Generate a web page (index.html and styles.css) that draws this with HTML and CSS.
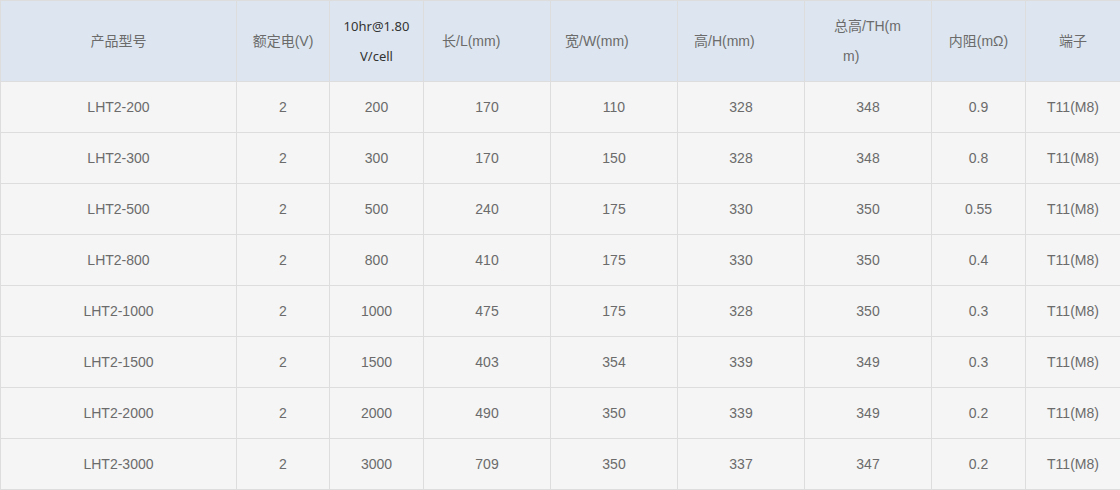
FILE: index.html
```html
<!DOCTYPE html>
<html lang="zh">
<head>
<meta charset="utf-8">
<title>产品参数</title>
<link rel="stylesheet" href="styles.css">
</head>
<body>
<table class="spec">
  <colgroup>
    <col class="c-model"><col class="c-volt"><col class="c-cap"><col class="c-mid"><col class="c-mid"><col class="c-mid"><col class="c-mid"><col class="c-res"><col class="c-term">
  </colgroup>
  <thead>
    <tr>
      <th>产品型号</th>
      <th>额定电(V)</th>
      <th class="h-cap">10hr@1.80 V/cell</th>
      <th class="h-left h-len">长/L(mm)</th>
      <th class="h-left h-wid">宽/W(mm)</th>
      <th class="h-left h-hei">高/H(mm)</th>
      <th class="h-left h-tot"><span class="wrap">总高/TH(mm)</span></th>
      <th>内阻(mΩ)</th>
      <th>端子</th>
    </tr>
  </thead>
  <tbody>
    <tr><td>LHT2-200</td><td>2</td><td>200</td><td>170</td><td>110</td><td>328</td><td>348</td><td>0.9</td><td>T11(M8)</td></tr>
    <tr><td>LHT2-300</td><td>2</td><td>300</td><td>170</td><td>150</td><td>328</td><td>348</td><td>0.8</td><td>T11(M8)</td></tr>
    <tr><td>LHT2-500</td><td>2</td><td>500</td><td>240</td><td>175</td><td>330</td><td>350</td><td>0.55</td><td>T11(M8)</td></tr>
    <tr><td>LHT2-800</td><td>2</td><td>800</td><td>410</td><td>175</td><td>330</td><td>350</td><td>0.4</td><td>T11(M8)</td></tr>
    <tr><td>LHT2-1000</td><td>2</td><td>1000</td><td>475</td><td>175</td><td>328</td><td>350</td><td>0.3</td><td>T11(M8)</td></tr>
    <tr><td>LHT2-1500</td><td>2</td><td>1500</td><td>403</td><td>354</td><td>339</td><td>349</td><td>0.3</td><td>T11(M8)</td></tr>
    <tr><td>LHT2-2000</td><td>2</td><td>2000</td><td>490</td><td>350</td><td>339</td><td>349</td><td>0.2</td><td>T11(M8)</td></tr>
    <tr><td>LHT2-3000</td><td>2</td><td>3000</td><td>709</td><td>350</td><td>337</td><td>347</td><td>0.2</td><td>T11(M8)</td></tr>
  </tbody>
</table>
</body>
</html>
```

FILE: styles.css
```css
html, body {
  margin: 0;
  padding: 0;
  background: #ffffff;
  overflow: hidden;
}

.spec {
  border-collapse: collapse;
  table-layout: fixed;
  width: 1121px;
  font-family: "Liberation Sans", Arial, "Noto Sans CJK SC", sans-serif;
  font-size: 14px;
  color: #6b6b6b;
}

.c-model { width: 236px; }
.c-volt { width: 93px; }
.c-cap { width: 94px; }
.c-mid { width: 127px; }
.c-res { width: 94px; }
.c-term { width: 95px; }

.spec th,
.spec td {
  border: 1px solid #dddddd;
  text-align: center;
  font-weight: normal;
  padding: 0;
}

.spec th {
  background: #dde6f0;
  line-height: 30px;
  height: 60px;
  padding: 10px 0;
}

.spec td {
  background: #f5f5f5;
  height: 50px;
  line-height: 20px;
}

.spec .h-cap {
  font-family: "Noto Sans", "Noto Sans CJK SC", sans-serif;
  font-size: 13px;
  color: #333333;
  padding-left: 8px;
  padding-right: 8px;
}

.spec .h-left { text-align: left; }
.spec .h-len { padding-left: 18px; }
.spec .h-wid { padding-left: 14px; }
.spec .h-hei { padding-left: 16px; }
.spec .h-tot { padding-left: 38px; }

.wrap {
  display: block;
  width: 70px;
  word-break: break-all;
  text-indent: -9px;
}
```
